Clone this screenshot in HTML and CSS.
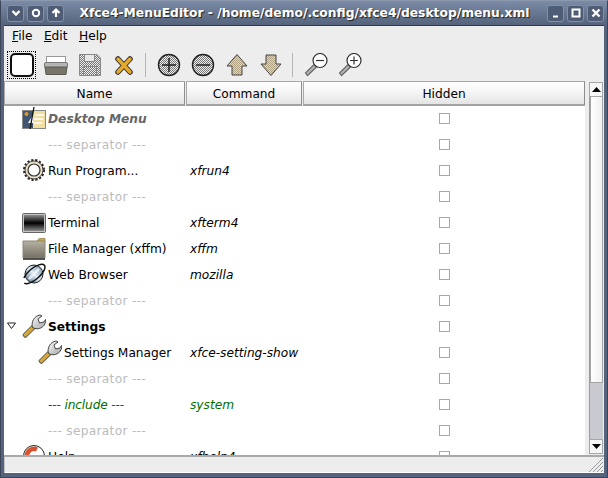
FILE: index.html
```html
<!DOCTYPE html>
<html lang="en">
<head>
<meta charset="utf-8">
<title>Xfce4-MenuEditor</title>
<link rel="stylesheet" href="styles.css">
</head>
<body>
<svg class="defs" width="0" height="0">
  <defs>
    <linearGradient id="wrenchG" x1="0" y1="0" x2="1" y2="1"><stop offset="0" stop-color="#f8f8f8"/><stop offset="1" stop-color="#a5a5a5"/></linearGradient>
    <linearGradient id="handleG" x1="0" y1="0" x2="1" y2="1"><stop offset="0" stop-color="#f0c64a"/><stop offset="1" stop-color="#b98a20"/></linearGradient>
    <linearGradient id="termG" x1="0" y1="0" x2="0" y2="1"><stop offset="0" stop-color="#8a8a8a"/><stop offset=".5" stop-color="#000"/><stop offset="1" stop-color="#8a8a8a"/></linearGradient>
    <linearGradient id="folderG" x1="0" y1="0" x2="0" y2="1"><stop offset="0" stop-color="#b5b2a2"/><stop offset="1" stop-color="#737064"/></linearGradient>
    <linearGradient id="globeG" x1="0" y1="1" x2="1" y2="0"><stop offset="0" stop-color="#2f5c80"/><stop offset=".5" stop-color="#e3ecf2"/><stop offset="1" stop-color="#5f86a5"/></linearGradient>
    <pattern id="dots" width="2" height="2" patternUnits="userSpaceOnUse"><rect width="2" height="2" fill="#ededed"/><rect width="1" height="1" fill="#777"/><rect x="1" y="1" width="1" height="1" fill="#777"/></pattern>
    <pattern id="dotsTan" width="2" height="2" patternUnits="userSpaceOnUse"><rect width="2" height="2" fill="#e2d4b4"/><rect width="1" height="1" fill="#b0a282"/><rect x="1" y="1" width="1" height="1" fill="#b0a282"/></pattern>
    <symbol id="wrench" viewBox="0 0 24 24">
      <path d="M1 20.500 10.500 11 13.500 14 3.800 23.500Q1.500 23.500 1 20.500Z" fill="url(#handleG)" stroke="#444"/>
      <path d="M10.500 13.500C9 8 12 2 18 1L20 2 16 5 17.500 9 22 8 23.500 5.500C24.500 11 19 16 13 14.500Z" fill="url(#wrenchG)" stroke="#444"/>
    </symbol>
  </defs>
</svg>
<div class="window">
  <header class="titlebar">
    <div class="tb-group">
      <span class="tb-btn"><svg width="12" height="12" viewBox="0 0 12 12"><path d="M2.500 4 6 7.500 9.500 4" fill="none" stroke="#fff" stroke-width="2.400"/></svg></span>
      <span class="tb-btn"><svg width="12" height="12" viewBox="0 0 12 12"><circle cx="6" cy="6" r="3.200" fill="none" stroke="#fff" stroke-width="2"/></svg></span>
      <span class="tb-btn"><svg width="12" height="12" viewBox="0 0 12 12"><path d="M2.500 6 6 2.500 9.500 6M6 3V10" fill="none" stroke="#fff" stroke-width="2.200"/></svg></span>
    </div>
    <div class="title">Xfce4-MenuEditor - /home/demo/.config/xfce4/desktop/menu.xml</div>
    <div class="tb-group">
      <span class="tb-btn"><svg width="12" height="12" viewBox="0 0 12 12"><path d="M3 9.500H8" stroke="#fff" stroke-width="2"/></svg></span>
      <span class="tb-btn"><svg width="12" height="12" viewBox="0 0 12 12"><rect x="2.500" y="2.500" width="7" height="7" fill="none" stroke="#fff" stroke-width="2"/></svg></span>
      <span class="tb-btn"><svg width="12" height="12" viewBox="0 0 12 12"><path d="M2.500 2.500 9.500 9.500M9.500 2.500 2.500 9.500" stroke="#fff" stroke-width="2.400"/></svg></span>
    </div>
  </header>
  <div class="body">
    <nav class="menubar">
      <span class="menu"><u>F</u>ile</span>
      <span class="menu"><u>E</u>dit</span>
      <span class="menu"><u>H</u>elp</span>
    </nav>
    <div class="toolbar">
      <span class="tool tool-focus"><svg width="24" height="24" viewBox="0 0 24 24"><rect x="1" y="1" width="22" height="22" rx="4" fill="#fff" stroke="#111" stroke-width="2"/></svg></span>
      <span class="tool"><svg width="24" height="24" viewBox="0 0 24 24"><rect x="2.500" y="3.500" width="19" height="8" fill="#fff" stroke="#999"/><rect x="0.500" y="9.500" width="23" height="5" rx="1.500" fill="#b5b5b5" stroke="#777"/><path d="M1 14H23L22 21.500H2Z" fill="#77756a" stroke="#5a5a52"/></svg></span>
      <span class="tool"><svg width="24" height="24" viewBox="0 0 24 24"><path d="M1.500 1.500H19L22.500 5V22.500H1.500Z" fill="url(#dots)" stroke="#888"/><rect x="6.500" y="1.500" width="10" height="7" fill="#e8e8e8" stroke="#888"/><rect x="5.500" y="13.500" width="13" height="9" fill="url(#dots)" stroke="#888"/></svg></span>
      <span class="tool"><svg width="24" height="24" viewBox="0 0 24 24"><path d="M6 6 18 19M18 6 6 19" stroke="#333" stroke-width="5.500" stroke-linecap="round"/><path d="M6 6 18 19M18 6 6 19" stroke="#e6ab2c" stroke-width="3.400" stroke-linecap="round"/></svg></span>
      <span class="vsep"></span>
      <span class="tool"><svg width="24" height="24" viewBox="0 0 24 24"><circle cx="12" cy="12" r="10.500" fill="url(#dots)" stroke="#222" stroke-width="1.400"/><path d="M5 12H19M12 5V19" stroke="#222" stroke-width="1.500"/></svg></span>
      <span class="tool"><svg width="24" height="24" viewBox="0 0 24 24"><circle cx="12" cy="12" r="10.500" fill="url(#dots)" stroke="#222" stroke-width="1.400"/><path d="M5 12H19" stroke="#222" stroke-width="1.500"/></svg></span>
      <span class="tool"><svg width="24" height="24" viewBox="0 0 24 24"><path d="M12 1.500 22 13H17V22H7V13H2Z" fill="url(#dotsTan)" stroke="#444"/></svg></span>
      <span class="tool"><svg width="24" height="24" viewBox="0 0 24 24"><path d="M12 22.500 22 11H17V2H7V11H2Z" fill="url(#dotsTan)" stroke="#444"/></svg></span>
      <span class="vsep"></span>
      <span class="tool"><svg width="24" height="24" viewBox="0 0 24 24"><path d="M1.500 20 3.500 22.500 12.500 14 10 11.500Z" fill="#b5b5b5" stroke="#666" stroke-width="1.200"/><circle cx="16" cy="7.500" r="7" fill="#fff" stroke="#333" stroke-width="1.200"/><path d="M12 7.500H20" stroke="#333" stroke-width="1.200"/></svg></span>
      <span class="tool"><svg width="24" height="24" viewBox="0 0 24 24"><path d="M1.500 20 3.500 22.500 12.500 14 10 11.500Z" fill="#b5b5b5" stroke="#666" stroke-width="1.200"/><circle cx="16" cy="7.500" r="7" fill="#fff" stroke="#333" stroke-width="1.200"/><path d="M12 7.500H20M16 3.500V11.500" stroke="#333" stroke-width="1.200"/></svg></span>
    </div>
    <div class="main">
      <div class="tree">
        <div class="head">
          <span class="col-name hcell">Name</span>
          <span class="col-cmd hcell">Command</span>
          <span class="col-hid hcell">Hidden</span>
        </div>
        <div class="rows">
          <div class="row"><span class="col-name cell l0"><svg class="ic" width="24" height="24" viewBox="0 0 24 24"><rect x=".5" y="4.500" width="23" height="18" fill="#f2dfa0" stroke="#888"/><rect x="1" y="5" width="10" height="17" fill="#3f5672"/><circle cx="4.500" cy="8" r="2" fill="#e39a22"/><path d="M6 17 11 9V17Z" fill="#fff"/><path d="M12 1 8 23" stroke="#111" stroke-width="1.300"/><path d="M13 9H22M12 13H21M12 17H20" stroke="#fff" stroke-width="1.500"/></svg><span class="root">Desktop Menu</span></span><span class="col-cmd cell"></span><span class="col-hid cell"><i class="check"></i></span></div>
          <div class="row"><span class="col-name cell l0"><span class="ic"></span><span class="sep">--- separator ---</span></span><span class="col-cmd cell"></span><span class="col-hid cell"><i class="check"></i></span></div>
          <div class="row"><span class="col-name cell l0"><svg class="ic" width="24" height="24" viewBox="0 0 24 24"><circle cx="12" cy="12" r="10" fill="none" stroke="#222" stroke-width="2" stroke-dasharray="2.200 1.800"/><circle cx="12" cy="12" r="9" fill="#eadfc6" stroke="#444"/><circle cx="12" cy="12" r="6" fill="#fff" stroke="#333" stroke-width="1.200"/></svg><span>Run Program...</span></span><span class="col-cmd cell cmd">xfrun4</span><span class="col-hid cell"><i class="check"></i></span></div>
          <div class="row"><span class="col-name cell l0"><span class="ic"></span><span class="sep">--- separator ---</span></span><span class="col-cmd cell"></span><span class="col-hid cell"><i class="check"></i></span></div>
          <div class="row"><span class="col-name cell l0"><svg class="ic" width="24" height="24" viewBox="0 0 24 24"><rect x=".5" y="3.500" width="23" height="19" rx="1" fill="#c4c4c4" stroke="#666"/><rect x="2" y="5" width="20" height="16" fill="url(#termG)"/></svg><span>Terminal</span></span><span class="col-cmd cell cmd">xfterm4</span><span class="col-hid cell"><i class="check"></i></span></div>
          <div class="row"><span class="col-name cell l0"><svg class="ic" width="24" height="24" viewBox="0 0 24 24"><path d="M15 5 17 2.500H23V6Z" fill="#d9a72e" stroke="#8a7a40" stroke-width=".7"/><path d="M1 5H23V22H1Z" fill="url(#folderG)" stroke="#8a8778"/><path d="M1 23H23" stroke="#222" stroke-width="1.500"/></svg><span>File Manager (xffm)</span></span><span class="col-cmd cell cmd">xffm</span><span class="col-hid cell"><i class="check"></i></span></div>
          <div class="row"><span class="col-name cell l0"><svg class="ic" width="24" height="24" viewBox="0 0 24 24"><circle cx="12" cy="12" r="9" fill="url(#globeG)" stroke="#222"/><path d="M7 17 17 7" stroke="#fff" stroke-width="2.500" opacity=".7"/><ellipse cx="12" cy="12" rx="13.500" ry="5.500" transform="rotate(-40 12 12)" fill="none" stroke="#111" stroke-width="1.500" stroke-dasharray="30 6"/></svg><span>Web Browser</span></span><span class="col-cmd cell cmd">mozilla</span><span class="col-hid cell"><i class="check"></i></span></div>
          <div class="row"><span class="col-name cell l0"><span class="ic"></span><span class="sep">--- separator ---</span></span><span class="col-cmd cell"></span><span class="col-hid cell"><i class="check"></i></span></div>
          <div class="row"><span class="col-name cell l0"><svg class="expander" width="10" height="8" viewBox="0 0 10 8"><path d="M.5 1H8.500L4.500 6.500Z" fill="#fff" stroke="#222"/></svg><svg class="ic" width="24" height="24"><use href="#wrench"/></svg><b>Settings</b></span><span class="col-cmd cell"></span><span class="col-hid cell"><i class="check"></i></span></div>
          <div class="row"><span class="col-name cell l1"><svg class="ic" width="24" height="24"><use href="#wrench"/></svg><span>Settings Manager</span></span><span class="col-cmd cell cmd">xfce-setting-show</span><span class="col-hid cell"><i class="check"></i></span></div>
          <div class="row"><span class="col-name cell l0"><span class="ic"></span><span class="sep">--- separator ---</span></span><span class="col-cmd cell"></span><span class="col-hid cell"><i class="check"></i></span></div>
          <div class="row"><span class="col-name cell l0"><span class="ic"></span><span class="inc inc-name">--- <em>include</em> ---</span></span><span class="col-cmd cell cmd inc">system</span><span class="col-hid cell"><i class="check"></i></span></div>
          <div class="row"><span class="col-name cell l0"><span class="ic"></span><span class="sep">--- separator ---</span></span><span class="col-cmd cell"></span><span class="col-hid cell"><i class="check"></i></span></div>
          <div class="row"><span class="col-name cell l0"><svg class="ic" width="24" height="24" viewBox="0 0 24 24"><circle cx="12" cy="12" r="10.500" fill="#fff" stroke="#222"/><path d="M5 12A7 7 0 0 1 15 5.500" fill="none" stroke="#d9512c" stroke-width="4.500"/></svg><span>Help</span></span><span class="col-cmd cell cmd">xfhelp4</span><span class="col-hid cell"><i class="check"></i></span></div>
        </div>
      </div>
      <div class="scrollbar">
        <span class="sb-btn"><svg width="9" height="5" viewBox="0 0 9 5"><path d="M0 5 4.500 0 9 5Z" fill="#000"/></svg></span>
        <div class="sb-track"><span class="sb-thumb"></span></div>
        <span class="sb-btn"><svg width="9" height="5" viewBox="0 0 9 5"><path d="M0 0 4.500 5 9 0Z" fill="#000"/></svg></span>
      </div>
    </div>
    <footer class="statusbar">
      <svg class="grip" width="15" height="15" viewBox="0 0 15 15"><path d="M15 1 1 15M15 5 5 15M15 9 9 15M15 13 13 15" stroke="#9a9a9a" stroke-width="1"/></svg>
    </footer>
  </div>
</div>
</body>
</html>
```

FILE: styles.css
```css
* { box-sizing: border-box; }
html, body { margin: 0; padding: 0; }
body {
  width: 608px;
  height: 478px;
  overflow: hidden;
  font-family: "DejaVu Sans", sans-serif;
  font-size: 12.2px;
  color: #000;
  background: #55647c;
}
.defs { display: block; height: 0; }
.window {
  height: 478px;
  display: flex;
  flex-direction: column;
  background: linear-gradient(#7c8ba6, #55647c 24px);
  border: 1px solid #3c4658;
  border-top-color: #8b97ad;
  padding: 0 3px 4px;
}
.titlebar {
  height: 24px;
  flex: none;
  display: flex;
  align-items: center;
  justify-content: space-between;
  margin: 0 0 0 3px;
}
.tb-group { display: flex; gap: 3px; }
.tb-btn {
  width: 17px;
  height: 17px;
  display: flex;
  align-items: center;
  justify-content: center;
  background: #4f5c76;
  border: 1px solid #8390a8;
  border-radius: 3px;
}
.title {
  flex: 1;
  text-align: center;
  color: #fff;
  font-weight: bold;
  font-size: 12.3px;
  white-space: nowrap;
  padding-right: 2px;
  text-shadow: 1px 1px 1px #222;
}
.body {
  flex: 1;
  min-height: 0;
  display: flex;
  flex-direction: column;
  background: #ededed;
  border-top: 1px solid #2f3848;
}
.menubar {
  height: 22px;
  flex: none;
  display: flex;
  align-items: center;
  gap: 11.5px;
  padding: 0 0 2px 8px;
}
.menu { line-height: 16px; }
.toolbar {
  height: 33px;
  flex: none;
  display: flex;
  align-items: center;
  padding-left: 3px;
}
.tool {
  width: 34px;
  height: 30px;
  flex: none;
  display: flex;
  align-items: center;
  justify-content: center;
}
.tool-focus {
  width: 29px;
  height: 28px;
  margin-right: 3px;
  outline: 1px dotted #000;
  outline-offset: -1px;
}
.vsep {
  width: 1px;
  height: 24px;
  flex: none;
  margin: 0 6px 0 4px;
  background: #b5b5b5;
}
.main {
  flex: 1;
  min-height: 0;
  display: flex;
  background: #fff;
}
.tree {
  flex: 1;
  min-width: 0;
  display: flex;
  flex-direction: column;
  overflow: hidden;
}
.head {
  height: 25px;
  flex: none;
  display: flex;
  background: #ededed;
}
.hcell {
  display: flex;
  align-items: center;
  justify-content: center;
  padding-top: 1px;
  background: linear-gradient(#fff, #f1f1f1 60%, #e4e4e4);
  border: 1px solid #a9a9a9;
  border-right-color: #8e8e8e;
  border-bottom: 2px solid #a2a2a2;
  margin-right: 1px;
}
.col-name { width: 181px; flex: none; }
.col-cmd { width: 116px; flex: none; }
.col-hid { width: 282px; flex: none; }
.rows { flex: 1; min-height: 0; overflow: hidden; margin-top: -1px; }
.row {
  height: 26px;
  display: flex;
  align-items: center;
}
.cell { white-space: nowrap; display: flex; align-items: center; }
.row .col-name { width: 182px; }
.row .col-cmd { width: 117px; padding-left: 4px; }
.row .col-hid { width: 282px; justify-content: center; }
.row .col-name > span:not(.ic), .row .col-name > b, .row .cmd { padding-top: 2px; }
.l0 { padding-left: 18px; }
.l1 { padding-left: 34px; }
.ic { width: 24px; height: 24px; flex: none; margin-right: 2px; display: block; }
.expander { flex: none; margin-left: -15px; margin-right: 5px; }
.root { font-style: italic; font-weight: bold; color: #666; }
.sep { color: #bcbcbc; letter-spacing: 0.3px; }
.inc { color: #007000; }
.inc-name { letter-spacing: -0.15px; }
.cmd { font-style: italic; }
.check {
  width: 11px;
  height: 11px;
  display: block;
  background: #fff;
  border: 1px solid #a8a8a8;
}
.scrollbar {
  width: 19px;
  flex: none;
  display: flex;
  flex-direction: column;
  background: #ededed;
  padding: 1px 1px 1px 4px;
}
.sb-btn {
  height: 15px;
  flex: none;
  display: flex;
  align-items: center;
  justify-content: center;
  background: #f7f7f7;
  border: 1px solid #a5a5a5;
}
.sb-track {
  flex: 1;
  min-height: 0;
  display: flex;
  background: #c9cad0;
  border-left: 1px solid #9a9aa0;
}
.sb-thumb {
  flex: none;
  width: 100%;
  height: 286px;
  background: linear-gradient(90deg, #fff, #f0f0f0);
  border: 1px solid #a5a5a5;
  border-top: 0;
}
.statusbar {
  height: 18px;
  flex: none;
  position: relative;
  background: #ededed;
  border-top: 2px solid #a9a9a9;
  box-shadow: inset 1px 0 #c5c5c5, inset 0 -1px #fff;
}
.grip { position: absolute; right: 1px; bottom: 1px; }
```
